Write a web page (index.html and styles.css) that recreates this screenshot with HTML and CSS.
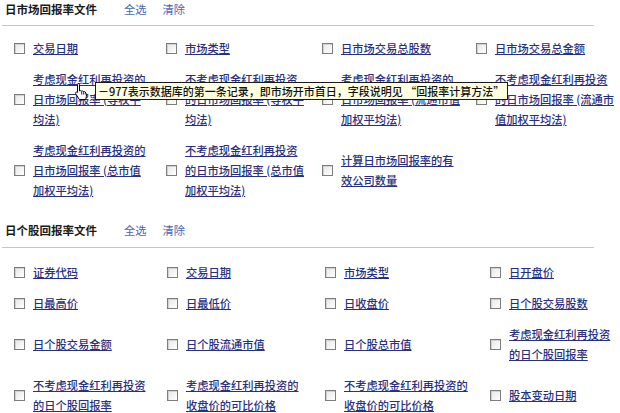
FILE: index.html
```html
<!DOCTYPE html>
<html lang="zh-CN">
<head>
<meta charset="utf-8">
<title>回报率文件</title>
<link rel="stylesheet" href="styles.css">
</head>
<body>
<div class="page">
  <section class="sec sec-market">
    <div class="head">
      <span class="title">日市场回报率文件</span>
      <a class="act act-all">全选</a>
      <a class="act">清除</a>
    </div>
    <div class="rule"></div>
    <div class="grid grid-market">
      <div class="cell"><span class="cb"></span><a class="lnk">交易日期</a></div>
      <div class="cell"><span class="cb"></span><a class="lnk">市场类型</a></div>
      <div class="cell"><span class="cb"></span><a class="lnk">日市场交易总股数</a></div>
      <div class="cell"><span class="cb"></span><a class="lnk">日市场交易总金额</a></div>

      <div class="cell"><span class="cb"></span><a class="lnk">考虑现金红利再投资的<br>日市场回报率 (等权平<br>均法)</a></div>
      <div class="cell"><span class="cb"></span><a class="lnk">不考虑现金红利再投资<br>的日市场回报率 (等权平<br>均法)</a></div>
      <div class="cell"><span class="cb"></span><a class="lnk">考虑现金红利再投资的<br>日市场回报率 (流通市值<br>加权平均法)</a></div>
      <div class="cell"><span class="cb"></span><a class="lnk">不考虑现金红利再投资<br>的日市场回报率 (流通市<br>值加权平均法)</a></div>

      <div class="cell"><span class="cb"></span><a class="lnk">考虑现金红利再投资的<br>日市场回报率 (总市值<br>加权平均法)</a></div>
      <div class="cell"><span class="cb"></span><a class="lnk">不考虑现金红利再投资<br>的日市场回报率 (总市值<br>加权平均法)</a></div>
      <div class="cell"><span class="cb"></span><a class="lnk">计算日市场回报率的有<br>效公司数量</a></div>
      <div class="cell"></div>
    </div>
  </section>

  <section class="sec sec-stock">
    <div class="head">
      <span class="title">日个股回报率文件</span>
      <a class="act act-all">全选</a>
      <a class="act">清除</a>
    </div>
    <div class="rule"></div>
    <div class="grid grid-stock">
      <div class="cell"><span class="cb"></span><a class="lnk">证券代码</a></div>
      <div class="cell"><span class="cb"></span><a class="lnk">交易日期</a></div>
      <div class="cell"><span class="cb"></span><a class="lnk">市场类型</a></div>
      <div class="cell"><span class="cb"></span><a class="lnk">日开盘价</a></div>

      <div class="cell"><span class="cb"></span><a class="lnk">日最高价</a></div>
      <div class="cell"><span class="cb"></span><a class="lnk">日最低价</a></div>
      <div class="cell"><span class="cb"></span><a class="lnk">日收盘价</a></div>
      <div class="cell"><span class="cb"></span><a class="lnk">日个股交易股数</a></div>

      <div class="cell"><span class="cb"></span><a class="lnk">日个股交易金额</a></div>
      <div class="cell"><span class="cb"></span><a class="lnk">日个股流通市值</a></div>
      <div class="cell"><span class="cb"></span><a class="lnk">日个股总市值</a></div>
      <div class="cell"><span class="cb"></span><a class="lnk">考虑现金红利再投资<br>的日个股回报率</a></div>

      <div class="cell"><span class="cb"></span><a class="lnk">不考虑现金红利再投资<br>的日个股回报率</a></div>
      <div class="cell"><span class="cb"></span><a class="lnk">考虑现金红利再投资的<br>收盘价的可比价格</a></div>
      <div class="cell"><span class="cb"></span><a class="lnk">不考虑现金红利再投资的<br>收盘价的可比价格</a></div>
      <div class="cell"><span class="cb"></span><a class="lnk">股本变动日期</a></div>
    </div>
  </section>

  <div class="tooltip">－977表示数据库的第一条记录，即市场开市首日，字段说明见 “回报率计算方法”</div>

  <svg class="cursor" width="16" height="20" viewBox="0 0 16 20">
    <path d="M5 1.5c.8 0 1.5.6 1.5 1.5v6l.2-.1c.6-.4 1.5-.3 1.9.3.5-.4 1.4-.3 1.8.3.6-.3 1.4-.1 1.8.5l.8 1.3c.5.9.6 2 .4 3l-.7 3.2H6.3L3 12.3c-.6-.8-.5-1.7.2-2.2.5-.3 1.1-.2 1.4.2l-.1-.1V3c0-.9.2-1.5.5-1.5z" fill="#fff" stroke="#000" stroke-width="1"/>
    <path d="M8.6 9.5v3M10.4 9.9v2.6M12.2 10.5v2" stroke="#000" stroke-width=".8" fill="none"/>
  </svg>
</div>
</body>
</html>
```

FILE: styles.css
```css
html, body {
  margin: 0;
  padding: 0;
  background: #ffffff;
}

body {
  font-family: "Noto Sans CJK SC", "Liberation Sans", sans-serif;
  font-size: 11.25px;
  color: #222;
}

.page {
  position: relative;
  width: 620px;
  height: 413px;
  overflow: hidden;
}

.head {
  display: flex;
  align-items: center;
  height: 18px;
  padding-left: 5px;
}

.title {
  font-weight: bold;
  color: #1a1a1a;
  font-size: 11.5px;
  width: 119px;
}

.act {
  color: #4a66b0;
  margin-right: 16px;
}

.rule {
  height: 1px;
  background: #c4c4c4;
  width: 592px;
  margin-left: 2px;
}

.sec-market .rule {
  margin-top: 7px;
  margin-bottom: 12px;
}

.sec-stock {
  margin-top: 21px;
}

.sec-stock .rule {
  margin-top: 8px;
  margin-bottom: 14px;
}

.grid {
  display: grid;
  row-gap: 11px;
  padding-left: 14px;
}

.grid-market {
  grid-template-columns: 152px 156px 154px 1fr;
}

.grid-stock {
  grid-template-columns: 153px 158px 165px 1fr;
}

.cell {
  display: flex;
  align-items: center;
  gap: 8px;
}

.cb {
  flex: none;
  width: 9px;
  height: 9px;
  border: 1px solid #7d7d7d;
  background: linear-gradient(135deg, #e6e6e6, #ffffff);
  box-shadow: inset 1px 1px 0 #d2d2d2;
}

.lnk {
  color: #2a3080;
  font-weight: 500;
  text-decoration: underline;
  line-height: 20px;
  white-space: nowrap;
}

.tooltip {
  position: absolute;
  left: 95px;
  top: 82px;
  height: 16px;
  line-height: 16px;
  padding: 0 3px 0 2px;
  background: #ffffe1;
  border: 1px solid #1a1a1a;
  color: #111;
  white-space: nowrap;
  font-size: 11px;
  font-weight: 500;
}

.cursor {
  position: absolute;
  left: 73px;
  top: 82px;
}
```
